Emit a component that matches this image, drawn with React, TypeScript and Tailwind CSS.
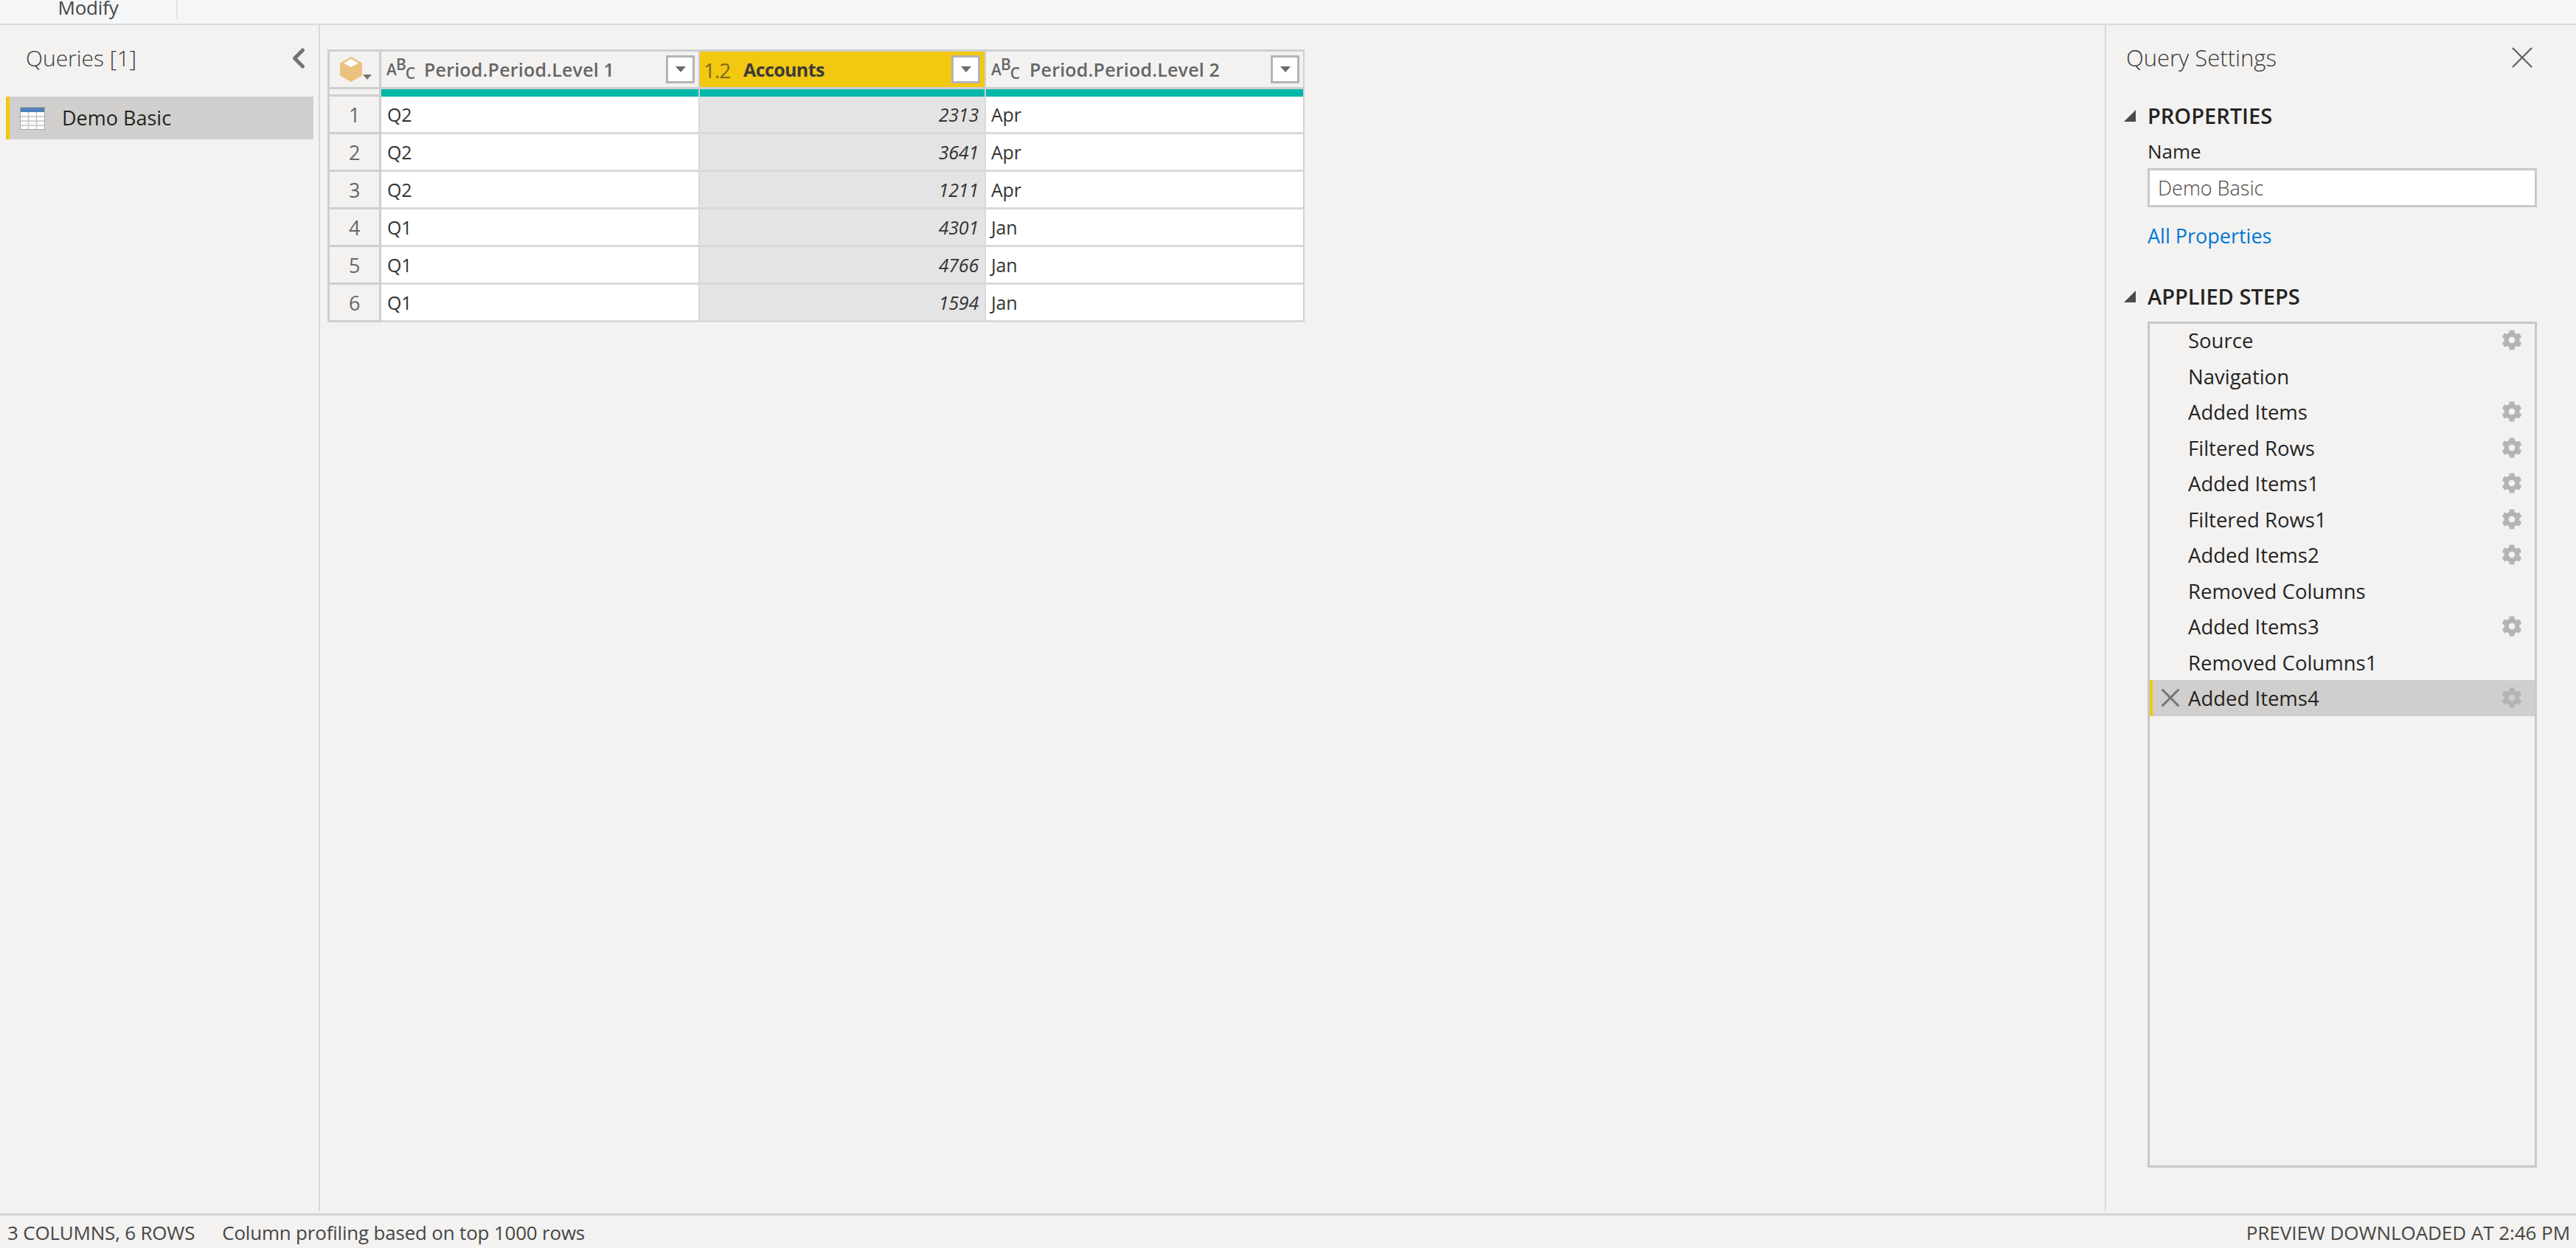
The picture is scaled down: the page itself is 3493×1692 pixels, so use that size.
import { ChevronLeft, X } from "lucide-react";
import { FaCog } from "react-icons/fa";

const ROWS = [
  { level1: "Q2", accounts: 2313, level2: "Apr" },
  { level1: "Q2", accounts: 3641, level2: "Apr" },
  { level1: "Q2", accounts: 1211, level2: "Apr" },
  { level1: "Q1", accounts: 4301, level2: "Jan" },
  { level1: "Q1", accounts: 4766, level2: "Jan" },
  { level1: "Q1", accounts: 1594, level2: "Jan" },
];

const STEPS = [
  { name: "Source", gear: true },
  { name: "Navigation", gear: false },
  { name: "Added Items", gear: true },
  { name: "Filtered Rows", gear: true },
  { name: "Added Items1", gear: true },
  { name: "Filtered Rows1", gear: true },
  { name: "Added Items2", gear: true },
  { name: "Removed Columns", gear: false },
  { name: "Added Items3", gear: true },
  { name: "Removed Columns1", gear: false },
  { name: "Added Items4", gear: true, active: true },
];

function TableIcon() {
  return (
    <svg width="34" height="31" viewBox="0 0 34 31" className="shrink-0">
      <rect x="0.5" y="0.5" width="33" height="30" fill="#fff" stroke="#a6a6a6" />
      <rect x="1" y="1" width="32" height="6" fill="#4f81bd" />
      <path d="M1 13h32M1 19h32M1 25h32M11.5 7v23M22.5 7v23" stroke="#c4c4c4" strokeWidth="1.5" />
    </svg>
  );
}

function CubeIcon() {
  return (
    <div className="flex items-end gap-[1px]">
      <svg width="30" height="34" viewBox="0 0 30 34">
        <path d="M15 0 30 8.5V25.5L15 34 0 25.5V8.5Z" fill="#eac17f" />
        <path d="M15 3 25 8.5 15 14 5 8.5Z" fill="#fff" />
      </svg>
      <svg width="12" height="7" viewBox="0 0 12 7" className="mb-[3px]">
        <path d="M0 0h12L6 7Z" fill="#767676" />
      </svg>
    </div>
  );
}

function AbcIcon() {
  return (
    <span className="flex h-[30px] w-[36px] shrink-0 items-start text-[21px] font-semibold leading-none tracking-[-1px] text-[#666666]">
      <span className="mt-[5px]">A</span>
      <span className="mt-[-2px]">B</span>
      <span className="mt-[10px]">C</span>
    </span>
  );
}

function FilterButton() {
  return (
    <span className="flex h-[38px] w-[39px] shrink-0 items-center justify-center border-[3px] border-[#b4b4b4] bg-white">
      <svg width="14" height="8" viewBox="0 0 14 8">
        <path d="M0 0h14L7 8Z" fill="#6b6b6b" />
      </svg>
    </span>
  );
}

function SectionHeading({ children }: { children: string }) {
  return (
    <div className="flex h-[30px] items-center">
      <svg width="16" height="16" viewBox="0 0 16 16" className="ml-[24px] shrink-0">
        <path d="M16 0V16H0Z" fill="#4a4a4a" />
      </svg>
      <span className="ml-[16px] text-[29px] font-semibold text-[#252423]">{children}</span>
    </div>
  );
}

export default function App() {
  return (
    <div className="flex h-screen w-full flex-col overflow-hidden bg-[#f3f2f1] font-['Open_Sans',sans-serif] text-[#252423]">
      {/* ribbon tab strip, cut off at the top */}
      <div className="flex h-[34px] shrink-0 items-start border-b-2 border-[#dcdcdc] bg-[#f5f6f8]">
        <div className="flex h-[26px] w-[241px] items-end justify-center border-r-2 border-[#e1e1e1]">
          <span className="text-[26px] leading-[32px] tracking-[-0.2px] text-[#484644]">Modify</span>
        </div>
      </div>

      <div className="flex min-h-0 flex-1">
        {/* queries pane */}
        <aside className="mb-[3px] w-[434px] shrink-0 border-r-2 border-[#d8d8d6]">
          <div className="flex h-[97px] items-center justify-between pb-[8px] pl-[35px] pr-[5px]">
            <span className="text-[30px] font-light text-[#3b3a39]">Queries [1]</span>
            <ChevronLeft size={44} strokeWidth={2.7} className="text-[#737373]" />
          </div>
          <div className="ml-[8px] flex h-[58px] w-[417px] items-center border-l-[5px] border-[#f2c811] bg-[#d0cfcd] pl-[14px]">
            <TableIcon />
            <span className="ml-[23px] pt-[1px] text-[27px]">Demo Basic</span>
          </div>
        </aside>

        {/* preview grid */}
        <main className="min-w-0 flex-1 pl-[10px] pt-[33px]">
          <div className="w-[1325px] border-b-0 border-l-[3px] border-r-[2px] border-t-[3px] border-[#cfcfcf] bg-white">
            <div className="flex h-[51px] bg-[#f3f2f1]">
              <div className="flex w-[70px] items-center justify-center border-b-[3px] border-r-[3px] border-[#cfcfcf] pl-[4px]">
                <CubeIcon />
              </div>
              <div className="flex w-[432px] items-center border-b-[3px] border-r-[2px] border-[#cfcfcf] pl-[7px] pr-[5px]">
                <AbcIcon />
                <span className="ml-[15px] flex-1 pt-[2px] text-[25px] font-semibold tracking-[0.2px] text-[#666666]">
                  Period.Period.Level 1
                </span>
                <FilterButton />
              </div>
              <div className="flex w-[388px] items-center border-b-[3px] border-r-[2px] border-[#cfcfcf] bg-[#f2c811] pl-[5px] pr-[6px]">
                <span className="w-[54px] pt-[2px] text-[28px] tracking-[-1px] text-[#7a6a1e]">1.2</span>
                <span className="flex-1 pt-[2px] text-[25px] font-bold tracking-[-0.6px] text-[#3b3a39]">Accounts</span>
                <FilterButton />
              </div>
              <div className="flex w-[430px] items-center border-b-[3px] border-[#cfcfcf] pl-[7px] pr-[5px]">
                <AbcIcon />
                <span className="ml-[16px] flex-1 pt-[2px] text-[25px] font-semibold tracking-[0.2px] text-[#666666]">
                  Period.Period.Level 2
                </span>
                <FilterButton />
              </div>
            </div>
            <div className="flex h-[10px]">
              <div className="w-[70px] border-b-[3px] border-r-[3px] border-[#cfcfcf] bg-[#f3f2f1]" />
              <div className="w-[432px] border-r-[2px] border-[#cfcfcf] bg-[#00b8aa]" />
              <div className="w-[388px] border-r-[2px] border-[#cfcfcf] bg-[#00b8aa]" />
              <div className="w-[430px] bg-[#00b8aa]" />
            </div>
            {ROWS.map((row, i) => (
              <div key={i} className="flex h-[51px] text-[25px] tracking-[-0.2px] text-[#333333]">
                <div className="flex w-[70px] items-center justify-center border-b-[3px] border-r-[3px] border-[#cfcfcf] bg-[#f3f2f1] pt-[2px] text-[27px] text-[#666666]">
                  {i + 1}
                </div>
                <div className="flex w-[432px] items-center border-b-[3px] border-r-[2px] border-[#d9d9d9] pl-[8px] pt-[2px]">
                  {row.level1}
                </div>
                <div className="flex w-[388px] items-center justify-end border-b-[3px] border-r-[2px] border-[#d9d9d9] bg-[#e4e4e4] pr-[8px] pt-[2px] italic">
                  {row.accounts}
                </div>
                <div className="flex w-[430px] items-center border-b-[3px] border-[#d9d9d9] pl-[7px] pt-[2px]">
                  {row.level2}
                </div>
              </div>
            ))}
          </div>
        </main>

        {/* query settings pane */}
        <aside className="mb-[3px] w-[639px] shrink-0 border-l-2 border-[#d8d8d6]">
          <div className="flex h-[92px] items-center justify-between pb-[4px] pl-[27px] pr-[48px]">
            <span className="text-[31px] font-light text-[#3b3a39]">Query Settings</span>
            <X size={50} strokeWidth={1} className="text-[#605e5c]" />
          </div>
          <div className="mt-[16px]">
            <SectionHeading>PROPERTIES</SectionHeading>
          </div>
          <div className="ml-[56px] mt-[18px] h-[30px] text-[26px] leading-[30px]">Name</div>
          <div className="ml-[56px] mt-[8px] flex h-[53px] w-[528px] items-center border-[3px] border-[#c8c8c6] bg-white pl-[11px] pt-[2px] text-[27px] font-light text-[#484644]">
            Demo Basic
          </div>
          <div className="ml-[56px] mt-[24px] h-[30px] text-[27px] leading-[30px] text-[#0078d4]">
            All Properties
          </div>
          <div className="mt-[52px]">
            <SectionHeading>APPLIED STEPS</SectionHeading>
          </div>
          <div className="ml-[56px] mt-[19px] h-[1147px] w-[528px] border-[3px] border-[#c8c8c6]">
            <div className="-mt-[2px]">
              {STEPS.map((step) => (
                <div
                  key={step.name}
                  className={`flex h-[48.5px] items-center pr-[17px] text-[27.5px] ${
                    step.active ? "border-l-[4px] border-[#f2c811] bg-[#d0cfcd] pl-[3px]" : "pl-[52px]"
                  }`}
                >
                  {step.active && <X size={42} strokeWidth={1.8} className="mr-[3px] shrink-0 text-[#767676]" />}
                  <span className="flex-1 pt-[1px]">{step.name}</span>
                  {step.gear && <FaCog size={28} className="text-[#b4b4b4]" />}
                </div>
              ))}
            </div>
          </div>
        </aside>
      </div>

      {/* status bar */}
      <footer className="flex h-[47px] shrink-0 items-center justify-between border-t-[3px] border-[#d2d2d0] pl-[10px] pr-[8px] pt-[3px] text-[26px] text-[#484644]">
        <div className="flex gap-[37px] tracking-[-0.2px]">
          <span>3 COLUMNS, 6 ROWS</span>
          <span>Column profiling based on top 1000 rows</span>
        </div>
        <span className="tracking-[-0.05px]">PREVIEW DOWNLOADED AT 2:46 PM</span>
      </footer>
    </div>
  );
}
